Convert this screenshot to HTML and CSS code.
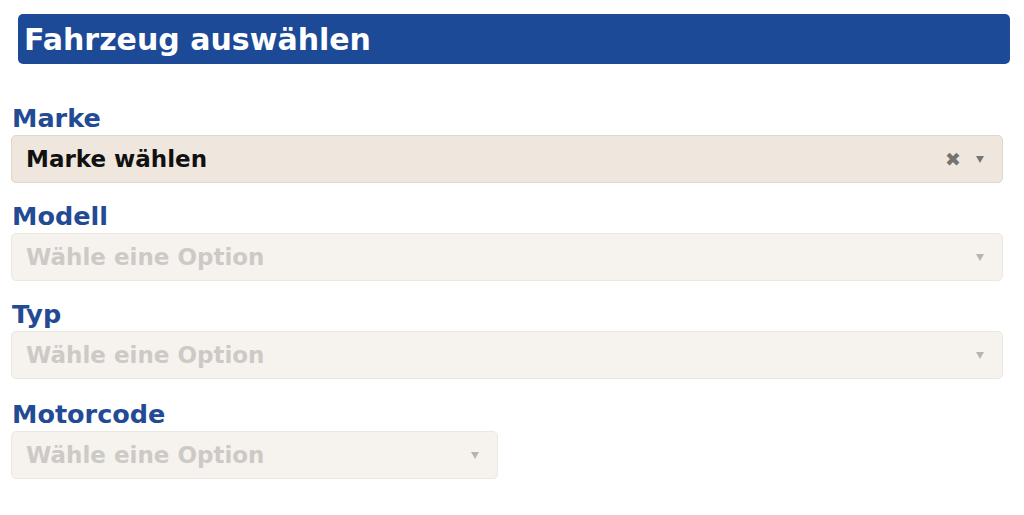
FILE: index.html
```html
<!DOCTYPE html>
<html>
<head>
    <title>Fahrzeug auswählen</title>
    <link rel="stylesheet" href="styles.css">
</head>
<body>
    <div class="header">
        <h1>Fahrzeug auswählen</h1>
    </div>

    <div class="form">
        <div class="field">
            <label>Marke</label>
            <div class="select active">
                <span class="value">Marke wählen</span>
                <span class="clear">&#10006;</span>
                <span class="arrow"></span>
            </div>
        </div>

        <div class="field">
            <label>Modell</label>
            <div class="select disabled">
                <span class="value">Wähle eine Option</span>
                <span class="arrow"></span>
            </div>
        </div>

        <div class="field">
            <label>Typ</label>
            <div class="select disabled">
                <span class="value">Wähle eine Option</span>
                <span class="arrow"></span>
            </div>
        </div>

        <div class="field half">
            <label>Motorcode</label>
            <div class="select disabled">
                <span class="value">Wähle eine Option</span>
                <span class="arrow"></span>
            </div>
        </div>
    </div>
</body>
</html>
```

FILE: styles.css
```css
body { font-family: "DejaVu Sans", sans-serif; font-weight: bold; margin: 0; padding: 14px 21px 0 11px; background: #fff; }
.header { background: #1c4a97; border-radius: 5px; height: 50px; margin: 0 -7px 0 7px; display: flex; align-items: center; padding: 0 6px; }
.header h1 { margin: 0; color: #fff; font-size: 30px; font-weight: bold; }
.form { display: flex; flex-direction: column; gap: 17px; margin-top: 38px; }
.field { display: flex; flex-direction: column; }
.field label { color: #234a94; font-size: 25.5px; height: 33px; line-height: 33px; padding-left: 1px; }
.select { height: 46px; border: 1px solid #dcd6cd; border-radius: 5px; display: flex; align-items: center; padding: 0 14px; font-size: 23px; }
.select .value { flex: 1; }
.select.active { background: #efe7dd; color: #111; }
.select.disabled { background: #f6f3ee; border-color: #ece8e1; color: #cdcac6; }
.clear { color: #76726e; font-size: 19px; margin-right: 15px; }
.arrow { width: 0; height: 0; border-left: 4px solid transparent; border-right: 4px solid transparent; border-top: 7px solid #777; margin-right: 4px; }
.disabled .arrow { border-top-color: #b8b5b1; }
.half { width: 487px; margin-top: 2px; }
```
